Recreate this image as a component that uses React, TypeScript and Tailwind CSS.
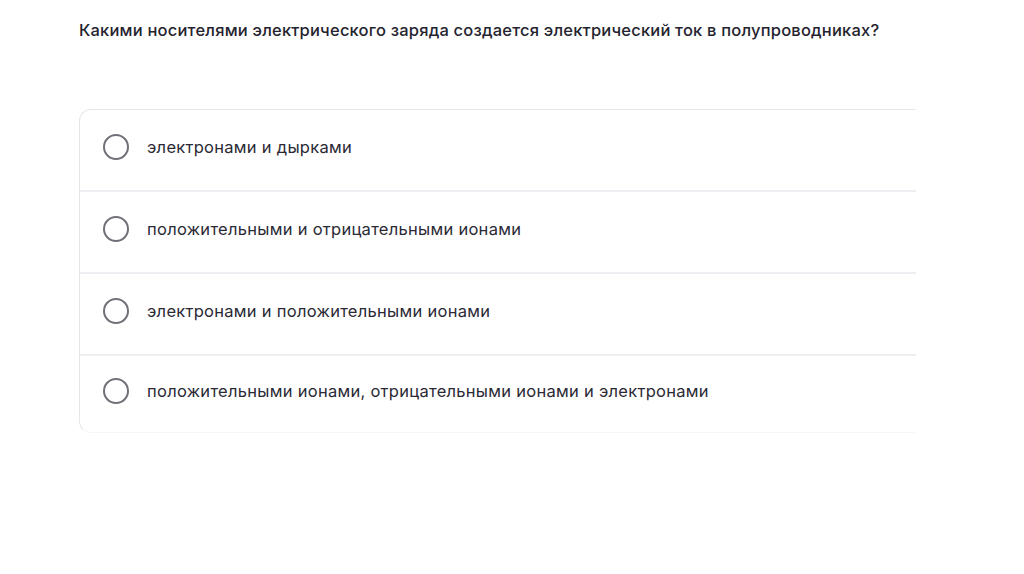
import React from "react";

const options = [
  "электронами и дырками",
  "положительными и отрицательными ионами",
  "электронами и положительными ионами",
  "положительными ионами, отрицательными ионами и электронами",
];

export default function App() {
  return (
    <div
      className="w-[1024px] h-[574px] bg-white overflow-hidden"
      style={{ fontFamily: "Inter, 'Noto Sans', 'Liberation Sans', sans-serif" }}
    >
      <div className="pl-[79px] pt-[19px]">
        <h1 className="text-[16.5px] leading-[22px] font-medium text-[#24232e] tracking-[0.2px]">
          Какими носителями электрического заряда создается электрический ток в полупроводниках?
        </h1>
        <div className="mt-[68px] w-[837px] border-l border-t border-b border-[#e6e6ec] border-b-[#f7f7f9] rounded-l-[12px] flex flex-col">
          {options.map((o, i) => (
            <div
              key={i}
              className={
                "shrink-0 flex items-center pl-[23px] " +
                (i < options.length - 1 ? "h-[82px] border-b-2 border-[#ededf2]" : "h-[76px]")
              }
            >
              <span className="w-[26px] h-[26px] rounded-full border-[2.5px] border-[#707078] shrink-0 -mt-[7px]" />
              <span className="ml-[18px] text-[16.5px] text-[#2a2935] tracking-[0.28px] -mt-[6px]">{o}</span>
            </div>
          ))}
        </div>
      </div>
    </div>
  );
}
